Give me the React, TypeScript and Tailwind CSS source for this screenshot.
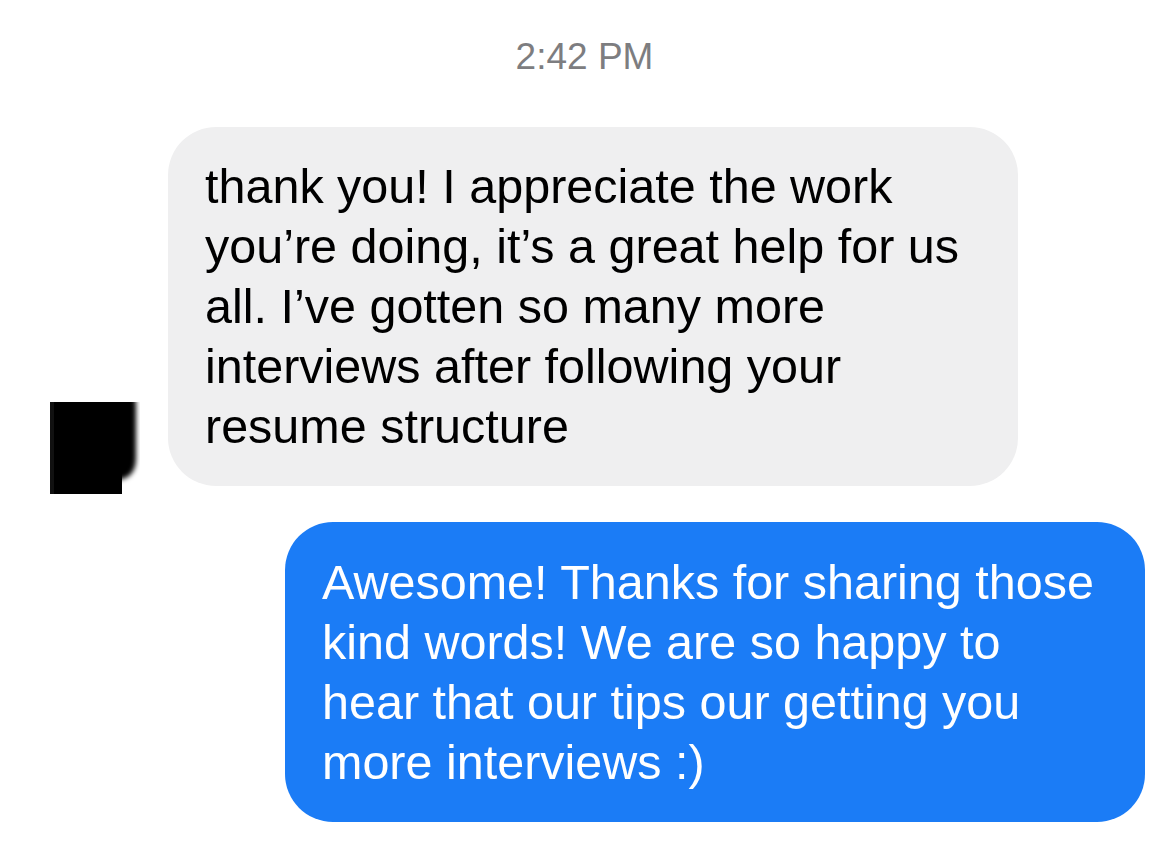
function Avatar() {
  return (
    <svg width="90" height="92" viewBox="0 0 90 92" className="shrink-0">
      <defs>
        <filter id="soft" x="-20%" y="-20%" width="140%" height="140%">
          <feGaussianBlur stdDeviation="2.5" />
        </filter>
      </defs>
      <path
        d="M-10 -10 H78 Q86 -10 86 4 V56 Q86 78 64 78 H-10 Z"
        fill="#000"
        filter="url(#soft)"
      />
      <rect x="0" y="0" width="78" height="10" fill="#000" />
      <rect x="0" y="0" width="72" height="92" fill="#000" />
      <rect x="0" y="0" width="4" height="92" fill="#111" />
    </svg>
  );
}

export default function App() {
  return (
    <div className="w-[1169px] h-[846px] bg-white font-['Liberation_Sans',Arial,sans-serif] overflow-hidden">
      <div className="pt-[35px] text-center text-[37px] leading-[44px] text-[#7d7d80]">
        2:42 PM
      </div>

      <div className="flex items-end mt-[48px] pl-[50px]">
        <Avatar />
        <div className="ml-[28px] mb-[8px] w-[850px] rounded-[48px] bg-[#efeff0] pl-[37px] pr-[30px] pt-[29px] pb-[30px] text-[48.5px] leading-[60px] text-black">
          thank you! I appreciate the work
          <br />
          you’re doing, it’s a great help for us
          <br />
          all. I’ve gotten so many more
          <br />
          interviews after following your
          <br />
          resume structure
        </div>
      </div>

      <div className="flex justify-end mt-[28px] pr-[24px]">
        <div className="w-[860px] rounded-[48px] bg-[#1b7cf6] pl-[37px] pr-[30px] pt-[30px] pb-[30px] text-[48.5px] leading-[60px] text-white">
          Awesome! Thanks for sharing those
          <br />
          kind words! We are so happy to
          <br />
          hear that our tips our getting you
          <br />
          more interviews :)
        </div>
      </div>
    </div>
  );
}
